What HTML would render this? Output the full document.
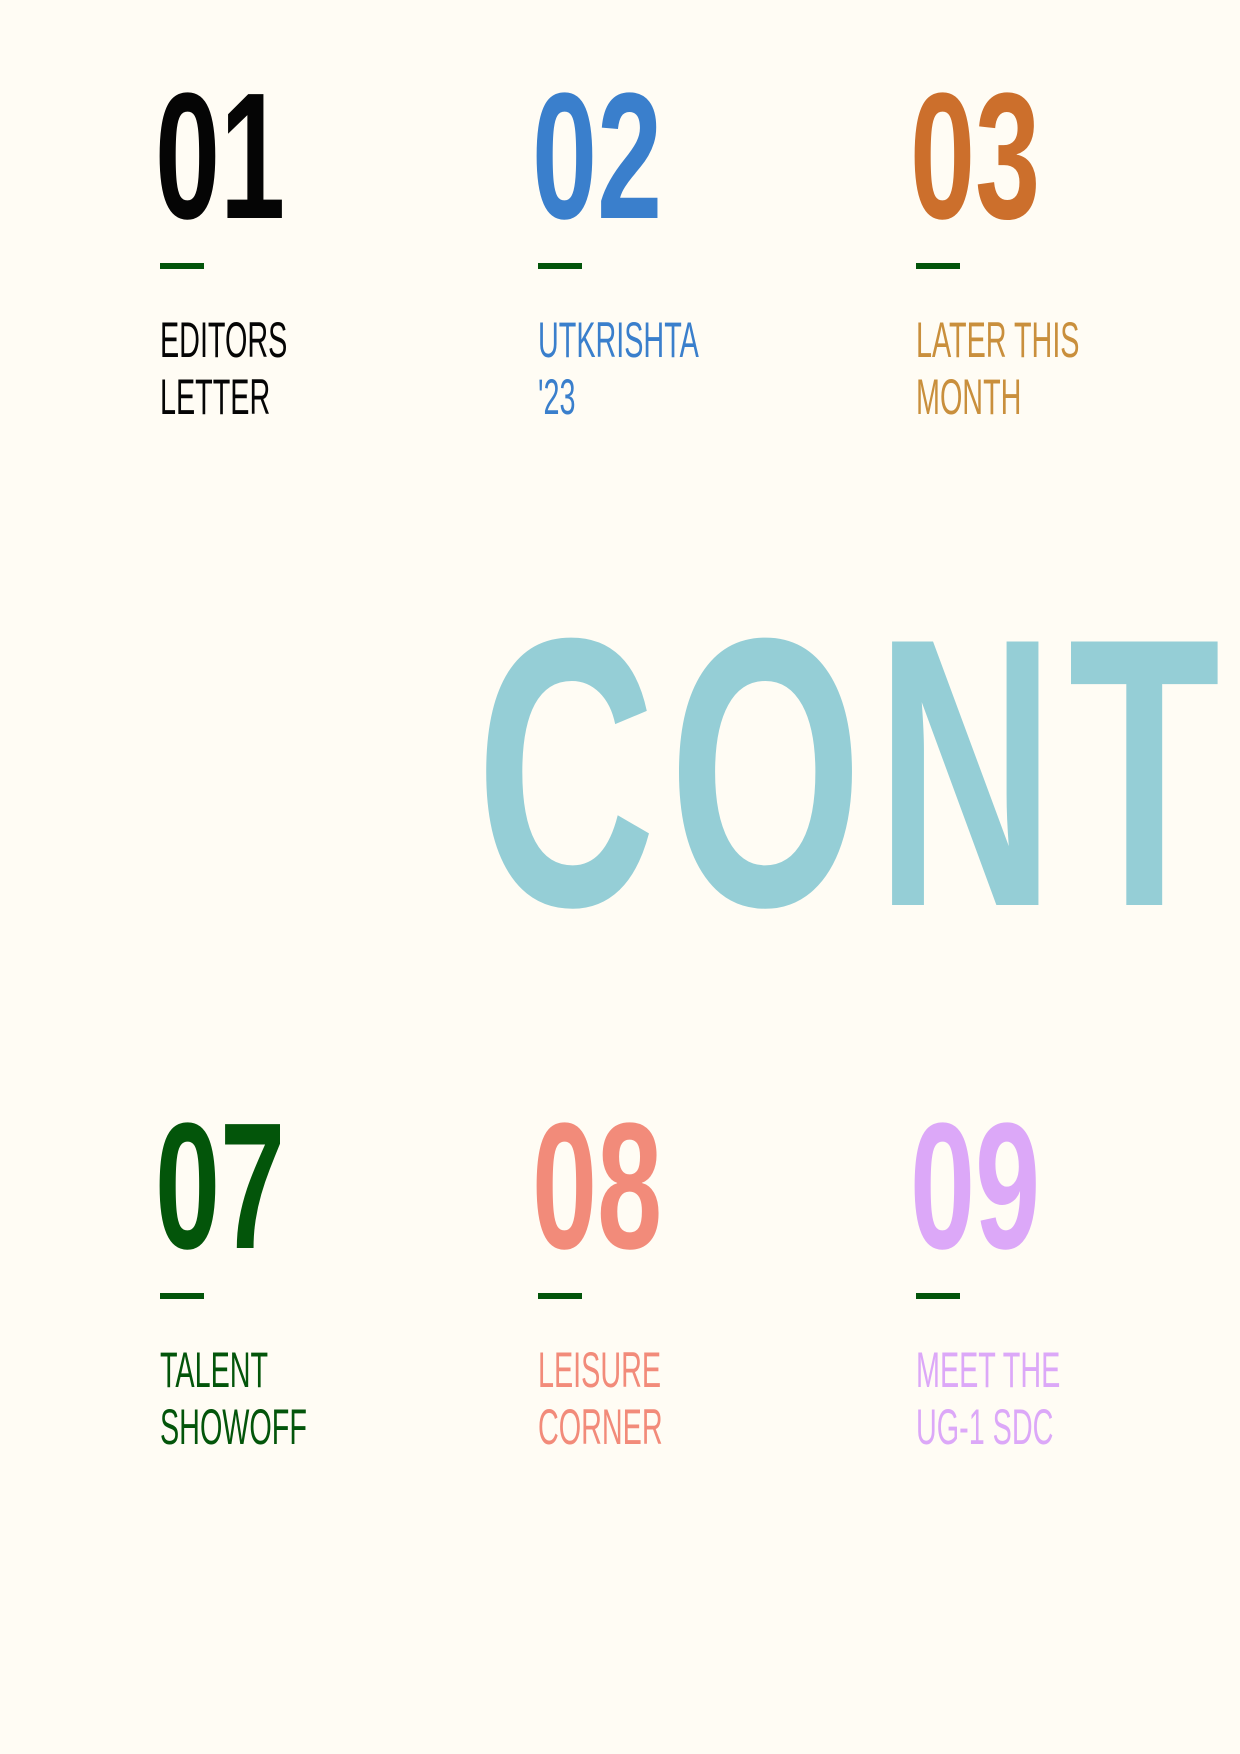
<!DOCTYPE html>
<html><head><meta charset="utf-8"><style>
html,body{margin:0;padding:0;}
body{width:1240px;height:1754px;background:#fffcf4;position:relative;overflow:hidden;font-family:"Liberation Sans",sans-serif;}
.n{position:absolute;font-weight:bold;font-size:180px;line-height:180px;transform:scaleX(0.65);transform-origin:0 0;white-space:nowrap;}
.d{position:absolute;width:44px;height:6px;background:#03550a;}
.l{position:absolute;font-size:50px;line-height:57px;transform:scaleX(0.575);transform-origin:0 0;white-space:nowrap;}
.c{position:absolute;left:476px;top:582px;font-weight:bold;font-size:383px;line-height:383px;color:#95ced6;transform:scaleX(0.65);transform-origin:0 0;white-space:nowrap;letter-spacing:20px;}
</style></head><body>
<div class="n" style="left:155px;top:67px;color:#050505">01</div>
<div class="n" style="left:532px;top:67px;color:#3a7fcc">02</div>
<div class="n" style="left:910px;top:67px;color:#cc6f2c">03</div>
<div class="d" style="left:160px;top:263px"></div>
<div class="d" style="left:538px;top:263px"></div>
<div class="d" style="left:916px;top:263px"></div>
<div class="l" style="left:160px;top:312px;color:#050505">EDITORS<br>LETTER</div>
<div class="l" style="left:538px;top:312px;color:#3a7fcc">UTKRISHTA<br>'23</div>
<div class="l" style="left:916px;top:312px;color:#c98f3c">LATER THIS<br>MONTH</div>

<div class="c">CONT</div>

<div class="n" style="left:155px;top:1097px;color:#03550a">07</div>
<div class="n" style="left:532px;top:1097px;color:#f28b7a">08</div>
<div class="n" style="left:910px;top:1097px;color:#dca8f8">09</div>
<div class="d" style="left:160px;top:1293px"></div>
<div class="d" style="left:538px;top:1293px"></div>
<div class="d" style="left:916px;top:1293px"></div>
<div class="l" style="left:160px;top:1342px;color:#03550a">TALENT<br>SHOWOFF</div>
<div class="l" style="left:538px;top:1342px;color:#f28b7a">LEISURE<br>CORNER</div>
<div class="l" style="left:916px;top:1342px;color:#dca8f8">MEET THE<br>UG-1 SDC</div>
</body></html>
